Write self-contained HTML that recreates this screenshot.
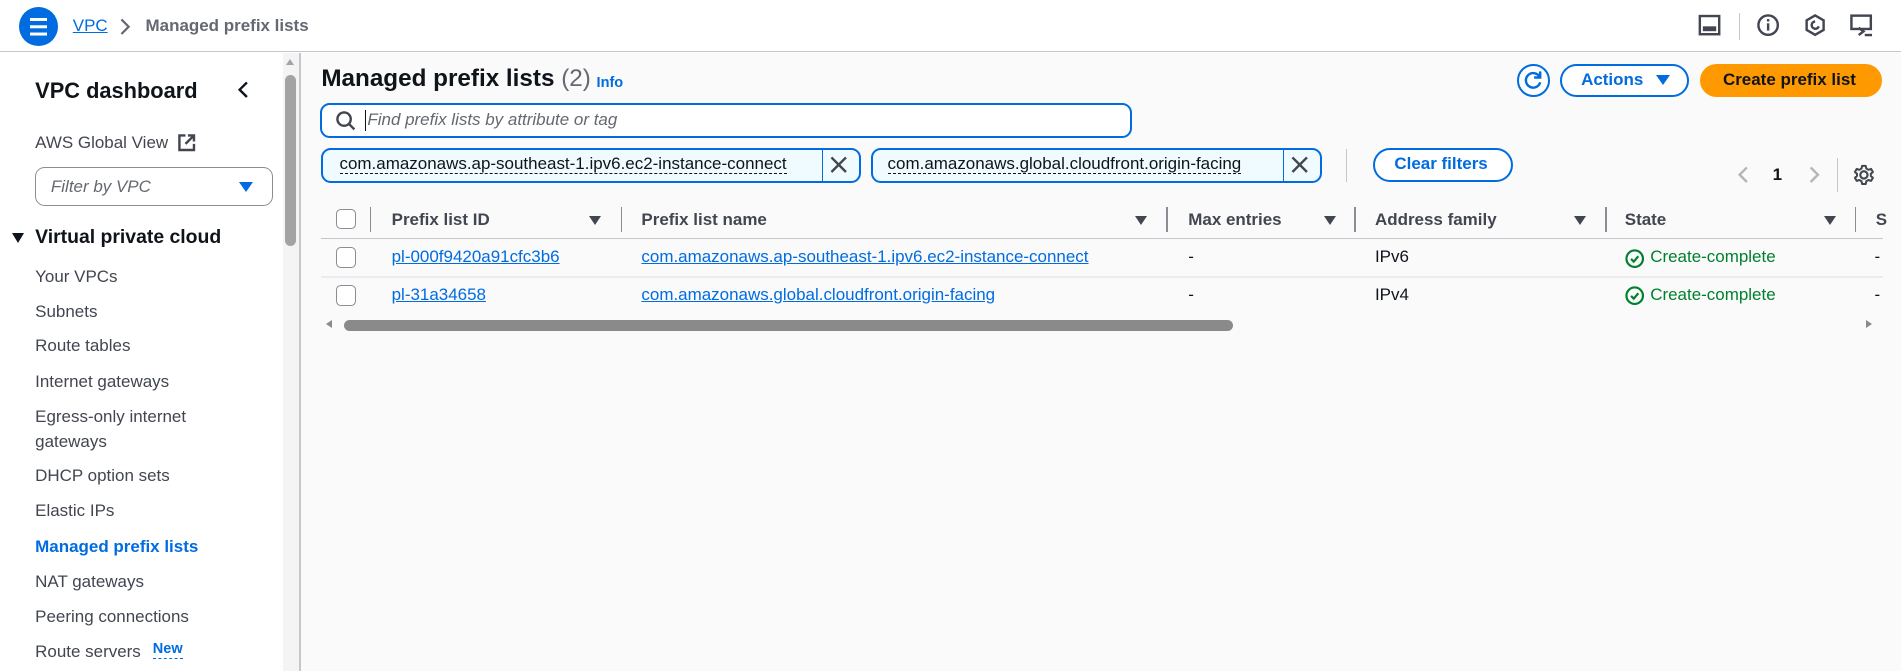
<!DOCTYPE html>
<html><head><meta charset="utf-8"><style>
*{box-sizing:border-box;margin:0;padding:0}
html,body{width:1901px;height:671px;overflow:hidden;background:#fff}
#w{zoom:1.2125;width:1568px;height:554px;position:relative;font-family:"Liberation Sans",sans-serif;color:#0f141a;font-size:14px}
.a{position:absolute;white-space:nowrap}
.blue{color:#006ce0}
.lnk{color:#006ce0;text-decoration:underline}
.sb{color:#414d5c;font-weight:bold}
.hd{font-weight:bold;color:#424650}
.tri{position:absolute;width:0;height:0;border-left:5px solid transparent;border-right:5px solid transparent;border-top:8px solid #424650}
.sep{position:absolute;width:1px;background:#8c8c94}
.cb{position:absolute;width:17px;height:17px;border:1.5px solid #8c8c94;border-radius:4px;background:#fff}
</style></head><body><div id="w">
<!-- header -->
<div class="a" style="left:0;top:0;width:1568px;height:43px;background:#fff;border-bottom:1px solid #c6c6cd"></div>
<div class="a" style="left:16px;top:6px;width:32px;height:32px;border-radius:50%;background:#006ce0"></div>
<div class="a" style="left:25px;top:15px;width:14px;height:2px;background:#fff;box-shadow:0 6px 0 #fff,0 12px 0 #fff"></div>
<div class="a lnk" style="left:60px;top:13px;font-size:14px">VPC</div>
<svg class="a" style="left:98px;top:14px" width="10" height="16"><path d="M2 2l6 6-6 6" stroke="#656871" stroke-width="1.8" fill="none"/></svg>
<div class="a" style="left:120px;top:13px;font-weight:bold;color:#656871">Managed prefix lists</div>
<svg class="a" style="left:1400px;top:11px" width="20" height="20"><rect x="1.5" y="2.5" width="16" height="15" fill="none" stroke="#424650" stroke-width="2"/><rect x="4" y="11" width="11" height="4" fill="#424650"/></svg>
<div class="a" style="left:1434px;top:11px;width:1px;height:22px;background:#c6c6cd"></div>
<svg class="a" style="left:1448px;top:11px" width="20" height="20"><circle cx="10" cy="10" r="8" fill="none" stroke="#424650" stroke-width="2"/><rect x="9" y="8.5" width="2" height="6" fill="#424650"/><rect x="9" y="5" width="2" height="2" fill="#424650"/></svg>
<svg class="a" style="left:1487px;top:11px" width="20" height="20"><path d="M10 2l7 4v8l-7 4-7-4V6z" fill="none" stroke="#424650" stroke-width="2"/><path d="M10 7a3 3 0 1 0 3 4" fill="none" stroke="#424650" stroke-width="2"/></svg>
<svg class="a" style="left:1525px;top:10px" width="22" height="22"><rect x="2" y="3" width="16" height="11" fill="none" stroke="#424650" stroke-width="2"/><path d="M8 13l4 3-4 3" fill="none" stroke="#424650" stroke-width="2"/><rect x="13" y="18" width="6" height="2" fill="#424650"/></svg>
<!-- sidebar -->
<div class="a" style="left:29px;top:64px;font-size:18px;font-weight:bold">VPC dashboard</div>
<svg class="a" style="left:195px;top:66px" width="12" height="16"><path d="M9 2L3 8l6 6" stroke="#0f141a" stroke-width="2" fill="none"/></svg>
<div class="a" style="left:29px;top:110px;color:#424650">AWS Global View</div>
<svg class="a" style="left:146px;top:110px" width="16" height="16"><path d="M7 2H2v12h12V9" fill="none" stroke="#424650" stroke-width="2"/><path d="M9 2h5v5M14 2L7 9" fill="none" stroke="#424650" stroke-width="2"/></svg>
<div class="a" style="left:29px;top:138px;width:196px;height:32px;border:1px solid #8c8c94;border-radius:8px;background:#fff"></div>
<div class="a" style="left:42px;top:146px;font-style:italic;color:#656871">Filter by VPC</div>
<div class="a" style="left:197px;top:150px;border-left:6px solid transparent;border-right:6px solid transparent;border-top:9px solid #006ce0"></div>
<div class="a" style="left:10px;top:192px;border-left:5px solid transparent;border-right:5px solid transparent;border-top:9px solid #0f141a"></div>
<div class="a" style="left:29px;top:186px;font-size:16px;font-weight:bold">Virtual private cloud</div>
<div class="a" style="left:29px;top:218px;color:#424650;line-height:21px">Your VPCs</div>
<div class="a" style="left:29px;top:247px;color:#424650;line-height:21px">Subnets</div>
<div class="a" style="left:29px;top:275px;color:#424650;line-height:21px">Route tables</div>
<div class="a" style="left:29px;top:304px;color:#424650;line-height:21px">Internet gateways</div>
<div class="a" style="left:29px;top:333px;color:#424650;line-height:21px">Egress-only internet<br>gateways</div>
<div class="a" style="left:29px;top:382px;color:#424650;line-height:21px">DHCP option sets</div>
<div class="a" style="left:29px;top:411px;color:#424650;line-height:21px">Elastic IPs</div>
<div class="a" style="left:29px;top:440px;color:#006ce0;font-weight:bold;line-height:21px">Managed prefix lists</div>
<div class="a" style="left:29px;top:469px;color:#424650;line-height:21px">NAT gateways</div>
<div class="a" style="left:29px;top:498px;color:#424650;line-height:21px">Peering connections</div>
<div class="a" style="left:29px;top:527px;color:#424650;line-height:21px">Route servers</div>
<div class="a" style="left:126px;top:529px;font-size:12px;font-weight:bold;color:#006ce0;border-bottom:1px dashed #006ce0;line-height:14px">New</div>
<!-- sidebar scrollbar -->
<div class="a" style="left:233px;top:44px;width:14px;height:510px;background:#f4f4f4"></div>
<div class="a" style="left:236px;top:49px;border-left:4px solid transparent;border-right:4px solid transparent;border-bottom:5px solid #a3a3a3"></div>
<div class="a" style="left:235px;top:62px;width:9px;height:141px;border-radius:5px;background:#a3a3a3"></div>
<div class="a" style="left:247px;top:44px;width:1px;height:510px;background:#c6c6cd"></div>
<!-- main -->
<div class="a" style="left:248px;top:44px;width:1320px;height:510px;background:#fafafa"></div>
<div class="a" style="left:265px;top:54px;font-size:20px;font-weight:bold">Managed prefix lists <span style="font-weight:normal;color:#656871">(2)</span></div>
<div class="a" style="left:492px;top:62px;font-size:12px;font-weight:bold;color:#006ce0">Info</div>
<div class="a" style="left:1251px;top:53px;width:27px;height:27px;border:2px solid #006ce0;border-radius:50%;background:#fff"></div>
<svg class="a" style="left:1255px;top:57px" width="19" height="19"><path d="M14.5 6.5A6 6 0 1 0 15 11" fill="none" stroke="#006ce0" stroke-width="2"/><path d="M15 2v5h-5" fill="none" stroke="#006ce0" stroke-width="2"/></svg>
<div class="a" style="left:1287px;top:53px;width:106px;height:27px;border:2px solid #006ce0;border-radius:14px;background:#fff"></div>
<div class="a" style="left:1304px;top:58px;font-weight:bold;color:#006ce0">Actions</div>
<div class="a" style="left:1366px;top:62px;border-left:6px solid transparent;border-right:6px solid transparent;border-top:9px solid #006ce0"></div>
<div class="a" style="left:1402px;top:53px;width:150px;height:27px;border-radius:14px;background:#ff9900"></div>
<div class="a" style="left:1421px;top:58px;font-weight:bold;color:#0f141a">Create prefix list</div>
<div class="a" style="left:264px;top:85px;width:670px;height:29px;border:2px solid #006ce0;border-radius:8px;background:#fff"></div>
<svg class="a" style="left:276px;top:91px" width="18" height="18"><circle cx="7.5" cy="7.5" r="5.5" fill="none" stroke="#424650" stroke-width="2"/><path d="M11.5 11.5l4.5 4.5" stroke="#424650" stroke-width="2"/></svg>
<div class="a" style="left:301px;top:91px;width:1px;height:17px;background:#0f141a"></div>
<div class="a" style="left:303px;top:91px;font-style:italic;color:#656871">Find prefix lists by attribute or tag</div>
<!-- tokens -->
<div class="a" style="left:265px;top:122px;width:445px;height:29px;border:2px solid #006ce0;border-radius:8px;background:#f0fbff"></div>
<div class="a" style="left:678px;top:124px;width:1px;height:25px;background:#006ce0"></div>
<div class="a" style="left:280px;top:127px;border-bottom:1px dashed #0f141a;line-height:16px">com.amazonaws.ap-southeast-1.ipv6.ec2-instance-connect</div>
<svg class="a" style="left:684px;top:128px" width="16" height="16"><path d="M2 2l12 12M14 2L2 14" stroke="#424650" stroke-width="2"/></svg>
<div class="a" style="left:718px;top:122px;width:372px;height:29px;border:2px solid #006ce0;border-radius:8px;background:#f0fbff"></div>
<div class="a" style="left:1058px;top:124px;width:1px;height:25px;background:#006ce0"></div>
<div class="a" style="left:732px;top:127px;border-bottom:1px dashed #0f141a;line-height:16px">com.amazonaws.global.cloudfront.origin-facing</div>
<svg class="a" style="left:1064px;top:128px" width="16" height="16"><path d="M2 2l12 12M14 2L2 14" stroke="#424650" stroke-width="2"/></svg>
<div class="a" style="left:1110px;top:123px;width:1px;height:27px;background:#c6c6cd"></div>
<div class="a" style="left:1132px;top:122px;width:116px;height:28px;border:2px solid #006ce0;border-radius:14px;background:#fff"></div>
<div class="a" style="left:1150px;top:127px;font-weight:bold;color:#006ce0">Clear filters</div>
<svg class="a" style="left:1432px;top:136px" width="12" height="16"><path d="M9 2L3 8l6 6" stroke="#b4b4bb" stroke-width="2" fill="none"/></svg>
<div class="a" style="left:1462px;top:136px;font-weight:bold">1</div>
<svg class="a" style="left:1490px;top:136px" width="12" height="16"><path d="M3 2l6 6-6 6" stroke="#b4b4bb" stroke-width="2" fill="none"/></svg>
<div class="a" style="left:1515px;top:130px;width:1px;height:28px;background:#c6c6cd"></div>
<svg class="a" style="left:1528px;top:135px" width="18" height="18" viewBox="0 0 24 24"><path d="M12 8a4 4 0 1 0 0 8 4 4 0 0 0 0-8z" fill="none" stroke="#424650" stroke-width="2.4"/><path d="M10 2h4l.6 3 2.4 1.4 2.9-1 2 3.4-2.3 2v2.4l2.3 2-2 3.4-2.9-1-2.4 1.4-.6 3h-4l-.6-3-2.4-1.4-2.9 1-2-3.4 2.3-2v-2.4l-2.3-2 2-3.4 2.9 1L9.4 5z" fill="none" stroke="#424650" stroke-width="2.2" stroke-linejoin="round"/></svg>
<!-- table -->
<div class="a" style="left:265px;top:196px;width:1288px;height:1px;background:#c6c6cd"></div>
<div class="a" style="left:265px;top:228px;width:1288px;height:1px;background:#ebebf0"></div>
<div class="cb" style="left:277px;top:172px"></div>
<div class="sep" style="left:305px;top:171px;height:20px"></div>
<div class="a hd" style="left:323px;top:173px">Prefix list ID</div>
<div class="tri" style="left:486px;top:178px"></div>
<div class="sep" style="left:512px;top:171px;height:20px"></div>
<div class="a hd" style="left:529px;top:173px">Prefix list name</div>
<div class="tri" style="left:936px;top:178px"></div>
<div class="sep" style="left:962px;top:171px;height:20px"></div>
<div class="a hd" style="left:980px;top:173px">Max entries</div>
<div class="tri" style="left:1092px;top:178px"></div>
<div class="sep" style="left:1117px;top:171px;height:20px"></div>
<div class="a hd" style="left:1134px;top:173px">Address family</div>
<div class="tri" style="left:1298px;top:178px"></div>
<div class="sep" style="left:1324px;top:171px;height:20px"></div>
<div class="a hd" style="left:1340px;top:173px">State</div>
<div class="tri" style="left:1504px;top:178px"></div>
<div class="sep" style="left:1530px;top:171px;height:20px"></div>
<div class="a hd" style="left:1547px;top:173px">S</div>
<div class="cb" style="left:277px;top:204px"></div>
<div class="a lnk" style="left:323px;top:204px">pl-000f9420a91cfc3b6</div>
<div class="a lnk" style="left:529px;top:204px">com.amazonaws.ap-southeast-1.ipv6.ec2-instance-connect</div>
<div class="a" style="left:980px;top:204px">-</div>
<div class="a" style="left:1134px;top:204px">IPv6</div>
<svg class="a" style="left:1340px;top:205px" width="16" height="16"><circle cx="8" cy="8" r="6.8" fill="none" stroke="#00802f" stroke-width="1.8"/><path d="M5 8.2l2.2 2.2L11 6" fill="none" stroke="#00802f" stroke-width="1.8"/></svg>
<div class="a" style="left:1361px;top:204px;color:#00802f">Create-complete</div>
<div class="a" style="left:1546px;top:204px">-</div>
<div class="cb" style="left:277px;top:235px"></div>
<div class="a lnk" style="left:323px;top:235px">pl-31a34658</div>
<div class="a lnk" style="left:529px;top:235px">com.amazonaws.global.cloudfront.origin-facing</div>
<div class="a" style="left:980px;top:235px">-</div>
<div class="a" style="left:1134px;top:235px">IPv4</div>
<svg class="a" style="left:1340px;top:236px" width="16" height="16"><circle cx="8" cy="8" r="6.8" fill="none" stroke="#00802f" stroke-width="1.8"/><path d="M5 8.2l2.2 2.2L11 6" fill="none" stroke="#00802f" stroke-width="1.8"/></svg>
<div class="a" style="left:1361px;top:235px;color:#00802f">Create-complete</div>
<div class="a" style="left:1546px;top:235px">-</div>
<!-- h scroll -->
<div class="a" style="left:269px;top:264px;border-top:4px solid transparent;border-bottom:4px solid transparent;border-right:5px solid #8a8a8a"></div>
<div class="a" style="left:284px;top:264px;width:733px;height:9px;border-radius:5px;background:#8a8a8a"></div>
<div class="a" style="left:1539px;top:264px;border-top:4px solid transparent;border-bottom:4px solid transparent;border-left:5px solid #8a8a8a"></div>
</div></body></html>
